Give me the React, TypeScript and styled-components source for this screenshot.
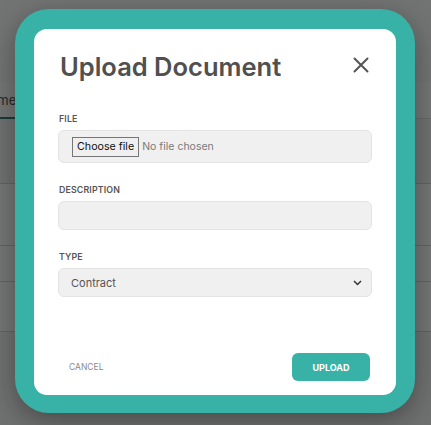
import styled, { createGlobalStyle } from "styled-components";

const GlobalStyle = createGlobalStyle`
  html, body {
    margin: 0;
    padding: 0;
    background: #ffffff;
    font-family: Inter, "Noto Sans", sans-serif;
  }
`;

const TEAL = "#38b2a6";

const rows = [65, 62, 36, 50];

export default function App() {
  return (
    <>
      <GlobalStyle />
      <Page>
        <TopBar />
        <Tabs>
          <Tab $active>Documents</Tab>
          <Tab>Notes</Tab>
        </Tabs>
        {rows.map((h, i) => (
          <TableRow key={i} $height={h} $shade={i === 0} />
        ))}
        <BottomArea />
      </Page>
      <Overlay>
        <Frame>
          <Card>
            <Header>
              <Title>Upload Document</Title>
              <CloseButton aria-label="Close">
                <svg width="16" height="16" viewBox="0 0 16 16">
                  <path
                    d="M1.5 1.5 L14.5 14.5 M14.5 1.5 L1.5 14.5"
                    stroke="#555555"
                    strokeWidth="2"
                    strokeLinecap="round"
                  />
                </svg>
              </CloseButton>
            </Header>
            <Field>
              <Label>File</Label>
              <FileBox>
                <ChooseButton>Choose file</ChooseButton>
                <FileText>No file chosen</FileText>
              </FileBox>
            </Field>
            <Field>
              <Label>Description</Label>
              <TextInput />
            </Field>
            <Field>
              <Label>Type</Label>
              <SelectBox>
                <span>Contract</span>
                <svg width="9" height="6" viewBox="0 0 9 6">
                  <path
                    d="M1 1 L4.5 4.5 L8 1"
                    stroke="#333"
                    strokeWidth="1.5"
                    fill="none"
                  />
                </svg>
              </SelectBox>
            </Field>
            <Footer>
              <CancelButton>Cancel</CancelButton>
              <UploadButton>Upload</UploadButton>
            </Footer>
          </Card>
        </Frame>
      </Overlay>
    </>
  );
}

const Page = styled.div`
  width: 431px;
  height: 425px;
  overflow: hidden;
  background: #ffffff;
`;

const TopBar = styled.div`
  height: 82px;
  background: #fafafa;
`;

const Tabs = styled.div`
  display: flex;
  height: 36px;
  margin-left: -49px;
  border-bottom: 1px solid #dddddd;
`;

const Tab = styled.div<{ $active?: boolean }>`
  padding: 10px 14px 0;
  font-size: 13px;
  color: #333;
  border-bottom: 2px solid ${({ $active }) => ($active ? "#16695f" : "transparent")};
  margin-bottom: -1px;
`;

const TableRow = styled.div<{ $height: number; $shade: boolean }>`
  height: ${({ $height }) => $height}px;
  background: ${({ $shade }) => ($shade ? "#f4f4f4" : "#ffffff")};
  border-bottom: 1px solid #cfcfcf;
  box-sizing: border-box;
`;

const BottomArea = styled.div`
  height: 120px;
  background: #f2f2f2;
`;

const Overlay = styled.div`
  position: fixed;
  inset: 0;
  background: rgba(30, 32, 33, 0.62);
  display: flex;
  justify-content: flex-start;
  align-items: flex-start;
  padding: 9px 0 0 15px;
`;

const Frame = styled.div`
  width: 400px;
  box-sizing: border-box;
  padding: 20px 19px 18px;
  background: ${TEAL};
  border-radius: 34px;
  box-shadow: 0 8px 28px rgba(0, 0, 0, 0.35);
`;

const Card = styled.div`
  background: #ffffff;
  border-radius: 13px;
  height: 366px;
  box-sizing: border-box;
  padding: 20px 24px 14px;
  display: flex;
  flex-direction: column;
`;

const Header = styled.div`
  display: flex;
  justify-content: space-between;
  align-items: flex-start;
  margin-bottom: 28px;
`;

const Title = styled.h2`
  margin: 0;
  font-size: 25.5px;
  font-weight: 600;
  color: #505050;
  line-height: 36px;
  padding-left: 2px;
`;

const CloseButton = styled.button`
  border: none;
  background: none;
  padding: 0;
  margin: 8px 3px 0 0;
  display: flex;
`;

const Field = styled.div`
  display: flex;
  flex-direction: column;
  margin-bottom: 21px;
`;

const Label = styled.label`
  font-size: 8.8px;
  font-weight: 600;
  letter-spacing: 0.15px;
  text-transform: uppercase;
  color: #555555;
  line-height: 11px;
  margin-bottom: 6px;
  padding-left: 1px;
`;

const InputBase = styled.div`
  background: #f0f0f0;
  border: 1px solid #e3e3e3;
  border-radius: 6px;
  box-sizing: border-box;
  display: flex;
  align-items: center;
`;

const FileBox = styled(InputBase)`
  height: 33px;
  padding: 0 13px;
  gap: 3px;
`;

const ChooseButton = styled.span`
  border: 1px solid #767676;
  background: #efefef;
  padding: 2px 4px;
  font-size: 10.7px;
  color: #111;
  line-height: 14px;
`;

const FileText = styled.span`
  font-size: 10.5px;
  color: #7a7a7a;
`;

const TextInput = styled(InputBase)`
  height: 29px;
`;

const SelectBox = styled(InputBase)`
  height: 29px;
  padding: 0 9px 0 12px;
  justify-content: space-between;
  font-size: 11px;
  color: #555555;
`;

const Footer = styled.div`
  margin-top: auto;
  display: flex;
  justify-content: space-between;
  align-items: center;
`;

const CancelButton = styled.button`
  border: none;
  background: none;
  font-family: Inter, sans-serif;
  font-size: 8.5px;
  color: #8a8a8a;
  text-transform: uppercase;
  padding: 0 0 0 11px;
`;

const UploadButton = styled.button`
  width: 78px;
  height: 28px;
  border: none;
  border-radius: 6px;
  background: ${TEAL};
  color: #ffffff;
  font-family: Inter, sans-serif;
  font-size: 9px;
  font-weight: 700;
  text-transform: uppercase;
  margin-right: 2px;
`;
